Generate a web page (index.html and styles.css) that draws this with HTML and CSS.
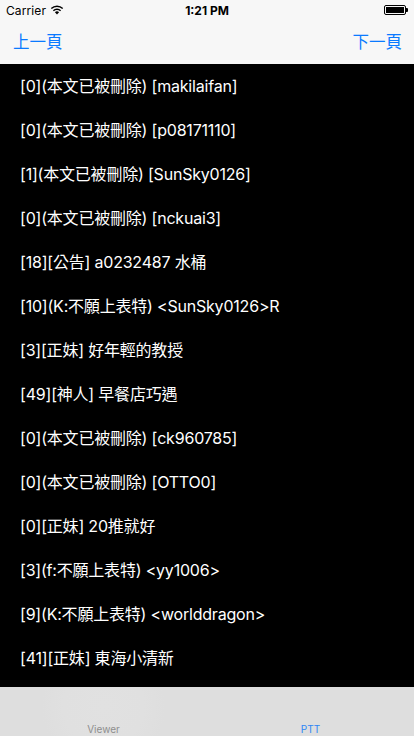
FILE: index.html
```html
<!DOCTYPE html>
<html>
<head>
<meta charset="utf-8">
<link rel="stylesheet" href="styles.css">
</head>
<body>
<div class="screen">
  <div class="status">
    <div class="status-left">
      <span>Carrier</span>
      <svg class="wifi" width="14" height="10" viewBox="0 0 14 10">
        <path d="M7 9.6 L4.9 7.3 A3 3 0 0 1 9.1 7.3 Z" fill="#000"/>
        <path d="M2.9 5.2 A5.8 5.8 0 0 1 11.1 5.2 L10.1 6.3 A4.4 4.4 0 0 0 3.9 6.3 Z" fill="#000"/>
        <path d="M0.8 3 A8.8 8.8 0 0 1 13.2 3 L12.2 4.1 A7.4 7.4 0 0 0 1.8 4.1 Z" fill="#000"/>
      </svg>
    </div>
    <div class="status-time">1:21 PM</div>
    <div class="status-right">
      <div class="battery"><div class="battery-fill"></div></div>
      <div class="battery-nub"></div>
    </div>
  </div>
  <div class="navbar">
    <span class="nav-btn">上一頁</span>
    <span class="nav-btn">下一頁</span>
  </div>
  <div class="list">
    <div class="row">[0](本文已被刪除) [makilaifan]</div>
    <div class="row">[0](本文已被刪除) [p08171110]</div>
    <div class="row">[1](本文已被刪除) [SunSky0126]</div>
    <div class="row">[0](本文已被刪除) [nckuai3]</div>
    <div class="row">[18][公告] a0232487 水桶</div>
    <div class="row">[10](K:不願上表特) &lt;SunSky0126&gt;R</div>
    <div class="row">[3][正妹] 好年輕的教授</div>
    <div class="row">[49][神人] 早餐店巧遇</div>
    <div class="row">[0](本文已被刪除) [ck960785]</div>
    <div class="row">[0](本文已被刪除) [OTTO0]</div>
    <div class="row">[0][正妹] 20推就好</div>
    <div class="row">[3](f:不願上表特) &lt;yy1006&gt;</div>
    <div class="row">[9](K:不願上表特) &lt;worlddragon&gt;</div>
    <div class="row">[41][正妹] 東海小清新</div>
  </div>
  <div class="tabbar">
    <div class="tab"><span class="tab-label">Viewer</span></div>
    <div class="tab active"><span class="tab-label">PTT</span></div>
  </div>
</div>
</body>
</html>
```
FILE: styles.css
```css
* { box-sizing: border-box; margin: 0; padding: 0; }
html, body { width: 414px; height: 736px; overflow: hidden; }
body {
  font-family: "Inter", "Noto Sans CJK TC", sans-serif;
  background: #000;
}
.screen {
  width: 414px;
  height: 736px;
  display: flex;
  flex-direction: column;
}
.status {
  height: 20px;
  background: #f7f7f7;
  display: flex;
  align-items: center;
  justify-content: space-between;
  padding: 0 6px 0 6px;
  font-size: 12px;
  color: #000;
  position: relative;
}
.status-left {
  display: flex;
  align-items: center;
  gap: 4px;
  font-family: "Inter", sans-serif;
  letter-spacing: 0.1px;
}
.wifi { margin-top: -1px; }
.status-time {
  position: absolute;
  left: 0;
  right: 0;
  text-align: center;
  font-weight: 700;
  pointer-events: none;
}
.status-right {
  display: flex;
  align-items: center;
}
.battery {
  width: 22px;
  height: 10px;
  border: 1px solid #000;
  border-radius: 2px;
  padding: 1px;
}
.battery-fill {
  width: 100%;
  height: 100%;
  background: #000;
}
.battery-nub {
  width: 2px;
  height: 4px;
  background: #000;
  border-radius: 0 1px 1px 0;
}
.navbar {
  height: 44px;
  background: #f7f7f7;
  display: flex;
  align-items: center;
  justify-content: space-between;
  padding: 0 12px 2px 13px;
}
.nav-btn {
  color: #0a7aff;
  font-size: 16.5px;
  font-family: "Noto Sans CJK TC", sans-serif;
  font-weight: 400;
}
.list {
  flex: 1;
  background: #000;
  display: flex;
  flex-direction: column;
}
.row {
  height: 44px;
  display: flex;
  align-items: center;
  padding: 0 0 3px 20px;
  color: #fff;
  font-size: 16px;
  letter-spacing: -0.2px;
  white-space: nowrap;
  font-family: "Inter", "Noto Sans CJK TC", sans-serif;
}
.tabbar {
  height: 49px;
  background: #dedede;
  display: flex;
}
.tab {
  flex: 1;
  display: flex;
  flex-direction: column;
  justify-content: flex-end;
  align-items: center;
  padding-bottom: 1px;
}
.tab:first-child {
  background: radial-gradient(circle at 50% 40%, #e1e1e1 0, #e0e0e0 40px, #dedede 62px);
}
.tab-label {
  font-size: 10px;
  color: #8e8e8e;
  font-family: "Inter", sans-serif;
}
.tab.active .tab-label { color: #2f86f5; }
```
